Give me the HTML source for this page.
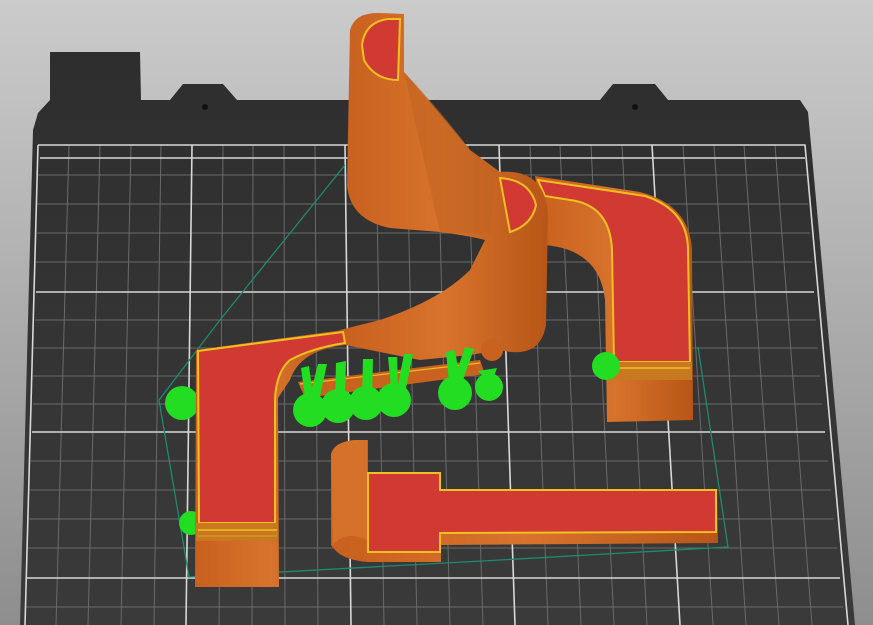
<!DOCTYPE html>
<html><head><style>html,body{margin:0;padding:0;width:873px;height:625px;overflow:hidden}</style></head>
<body>
<svg width="873" height="625" viewBox="0 0 873 625" xmlns="http://www.w3.org/2000/svg">
<defs>
<linearGradient id="bg" x1="0" y1="0" x2="0" y2="1"><stop offset="0" stop-color="#cbcbcb"/><stop offset="1" stop-color="#8e8e8e"/></linearGradient>
<linearGradient id="bed" x1="0" y1="0" x2="0" y2="1"><stop offset="0" stop-color="#2e2e2e"/><stop offset="1" stop-color="#3a3a3a"/></linearGradient>
<linearGradient id="or" x1="0" y1="0" x2="1" y2="0"><stop offset="0" stop-color="#c8601e"/><stop offset="0.5" stop-color="#d7732c"/><stop offset="1" stop-color="#b85618"/></linearGradient>
</defs>
<rect width="873" height="625" fill="url(#bg)"/>
<!-- bed -->
<path d="M50,52 L140,52 L141,100 L170,100 L183,84 L223,84 L237,100 L600,100 L613,84 L655,84 L668,100 L800,100 L808,112 L855,625 L20,625 L33,130 L38,113 L50,100 Z" fill="url(#bed)"/>
<circle cx="205" cy="107" r="3" fill="#111"/><circle cx="635" cy="107" r="3" fill="#111"/>
<!-- grid -->
<g stroke="#6a6a6a" stroke-width="1">
<line x1="69" y1="145" x2="56" y2="625"/><line x1="100" y1="145" x2="88" y2="625"/><line x1="131" y1="145" x2="121" y2="625"/><line x1="161" y1="145" x2="154" y2="625"/>
<line x1="223" y1="145" x2="219" y2="625"/><line x1="253" y1="145" x2="252" y2="625"/><line x1="284" y1="145" x2="285" y2="625"/><line x1="315" y1="145" x2="318" y2="625"/>
<line x1="376" y1="145" x2="384" y2="625"/><line x1="407" y1="145" x2="417" y2="625"/><line x1="438" y1="145" x2="450" y2="625"/><line x1="468" y1="145" x2="483" y2="625"/>
<line x1="530" y1="145" x2="548" y2="625"/><line x1="560" y1="145" x2="581" y2="625"/><line x1="591" y1="145" x2="614" y2="625"/><line x1="622" y1="145" x2="647" y2="625"/>
<line x1="683" y1="145" x2="713" y2="625"/><line x1="714" y1="145" x2="746" y2="625"/><line x1="744" y1="145" x2="779" y2="625"/><line x1="775" y1="145" x2="812" y2="625"/>
<line x1="37" y1="175" x2="807" y2="175"/><line x1="37" y1="204" x2="808" y2="204"/><line x1="37" y1="233" x2="810" y2="233"/><line x1="36" y1="262" x2="812" y2="262"/>
<line x1="35" y1="320" x2="816" y2="320"/><line x1="34" y1="348" x2="818" y2="348"/><line x1="33" y1="376" x2="820" y2="376"/><line x1="33" y1="404" x2="822" y2="404"/>
<line x1="31" y1="461" x2="828" y2="461"/><line x1="30" y1="490" x2="831" y2="490"/><line x1="29" y1="519" x2="834" y2="519"/><line x1="28" y1="548" x2="837" y2="548"/>
<line x1="26" y1="607" x2="843" y2="607"/>
</g>
<g stroke="#d8d8d8" stroke-width="1.6" fill="none">
<path d="M38,145 L805,145 L848,625"/><line x1="38" y1="145" x2="25" y2="625"/><line x1="40" y1="158" x2="805" y2="158"/>
<line x1="192" y1="145" x2="186" y2="625"/><line x1="345" y1="145" x2="351" y2="625"/><line x1="499" y1="145" x2="515" y2="625"/><line x1="652" y1="145" x2="680" y2="625"/>
<line x1="36" y1="292" x2="814" y2="292"/><line x1="32" y1="432" x2="825" y2="432"/><line x1="27" y1="578" x2="840" y2="578"/>
</g>
<!-- hull -->
<path d="M345,165 L220,320 L159,400 L189,577 L500,560 L728,547 L698,347" fill="none" stroke="#1f8a6e" stroke-width="1.3"/>
<!-- right L piece -->
<path d="M535,176 L640,192 Q690,205 692,250 L693,420 L607,422 L605,300 Q600,250 545,245 Z" fill="url(#or)"/>
<path d="M538,180 L645,196 Q688,210 688,250 L690,362 L614,362 L612,250 Q610,205 570,200 L545,196 Z" fill="#d03a32" stroke="#f0c020" stroke-width="2"/>
<rect x="608" y="362" width="84" height="18" fill="#c8781e"/>
<line x1="610" y1="368" x2="690" y2="368" stroke="#f0c020" stroke-width="1.5"/>
<!-- tall S piece -->
<path d="M350,30 Q355,12 380,13 L404,14 L404,72 Q420,90 470,150 L500,172 Q545,168 548,215 L546,325 Q540,360 500,350 L470,355 L420,360 L345,345 L340,330 L380,320 Q440,300 470,270 L485,240 Q470,236 440,232 L390,228 Q350,220 347,185 Z" fill="url(#or)"/>
<path d="M404,72 Q440,110 470,150 L495,170 L490,235 L440,232 Z" fill="#c26422" opacity="0.6"/>
<path d="M362,45 Q365,22 388,19 L400,19 L398,80 Q375,80 364,60 Z" fill="#d03a32" stroke="#f0c020" stroke-width="2"/>
<path d="M500,178 Q530,180 536,205 Q532,225 510,232 Z" fill="#d03a32" stroke="#f0c020" stroke-width="2"/>
<!-- supports -->
<path d="M298,382 L480,360 L485,374 L305,398 Z" fill="#c8621e"/>
<line x1="300" y1="384" x2="480" y2="363" stroke="#f0c020" stroke-width="1.2"/>
<g fill="#22dd22">
<circle cx="182" cy="403" r="17"/><circle cx="191" cy="523" r="12"/><circle cx="606" cy="366" r="14"/>
<circle cx="310" cy="410" r="17"/><circle cx="338" cy="406" r="17"/><circle cx="366" cy="403" r="17"/><circle cx="394" cy="400" r="17"/>
<circle cx="455" cy="393" r="17"/><circle cx="489" cy="387" r="14"/>
<path d="M301,368 L309,366 L312,388 L318,364 L327,364 L318,405 L306,405 Z"/>
<path d="M336,363 L346,361 L345,400 L335,400 Z"/><path d="M363,359 L373,359 L372,398 L362,398 Z"/>
<path d="M388,357 L397,357 L398,385 L404,354 L413,354 L404,398 L392,398 Z"/>
<path d="M446,352 L455,350 L458,368 L465,347 L474,349 L463,380 L461,392 L450,392 Z"/>
<path d="M478,371 L497,368 L491,385 Z"/>
</g>
<circle cx="492" cy="350" r="11" fill="#c8621e"/>
<!-- left L piece -->
<path d="M196,350 L343,330 L345,345 Q300,350 290,380 L278,398 L279,587 L195,587 Z" fill="url(#or)"/>
<path d="M198,351 L343,332 L345,343 Q312,348 290,360 Q276,372 275,400 L275,523 L199,523 Z" fill="#d03a32" stroke="#f0c020" stroke-width="2"/>
<rect x="196" y="523" width="82" height="18" fill="#c8781e"/>
<line x1="198" y1="530" x2="277" y2="530" stroke="#f0c020" stroke-width="1.5"/>
<line x1="198" y1="536" x2="277" y2="536" stroke="#e0a030" stroke-width="1"/>
<!-- bottom T piece -->
<path d="M331,455 Q333,442 355,440 L368,440 L368,473 L441,473 L441,490 L717,490 L718,543 L441,545 L441,562 L368,562 Q340,560 331,545 Z" fill="url(#or)"/>
<path d="M368,473 L440,473 L440,490 L716,490 L716,532 L440,533 L440,552 L368,552 Z" fill="#d03a32" stroke="#f0c020" stroke-width="2"/>
<path d="M331,455 Q333,442 355,440 L367,440 L367,540 Q345,530 333,545 Z" fill="#d5712a"/>
</svg>
</body></html>
